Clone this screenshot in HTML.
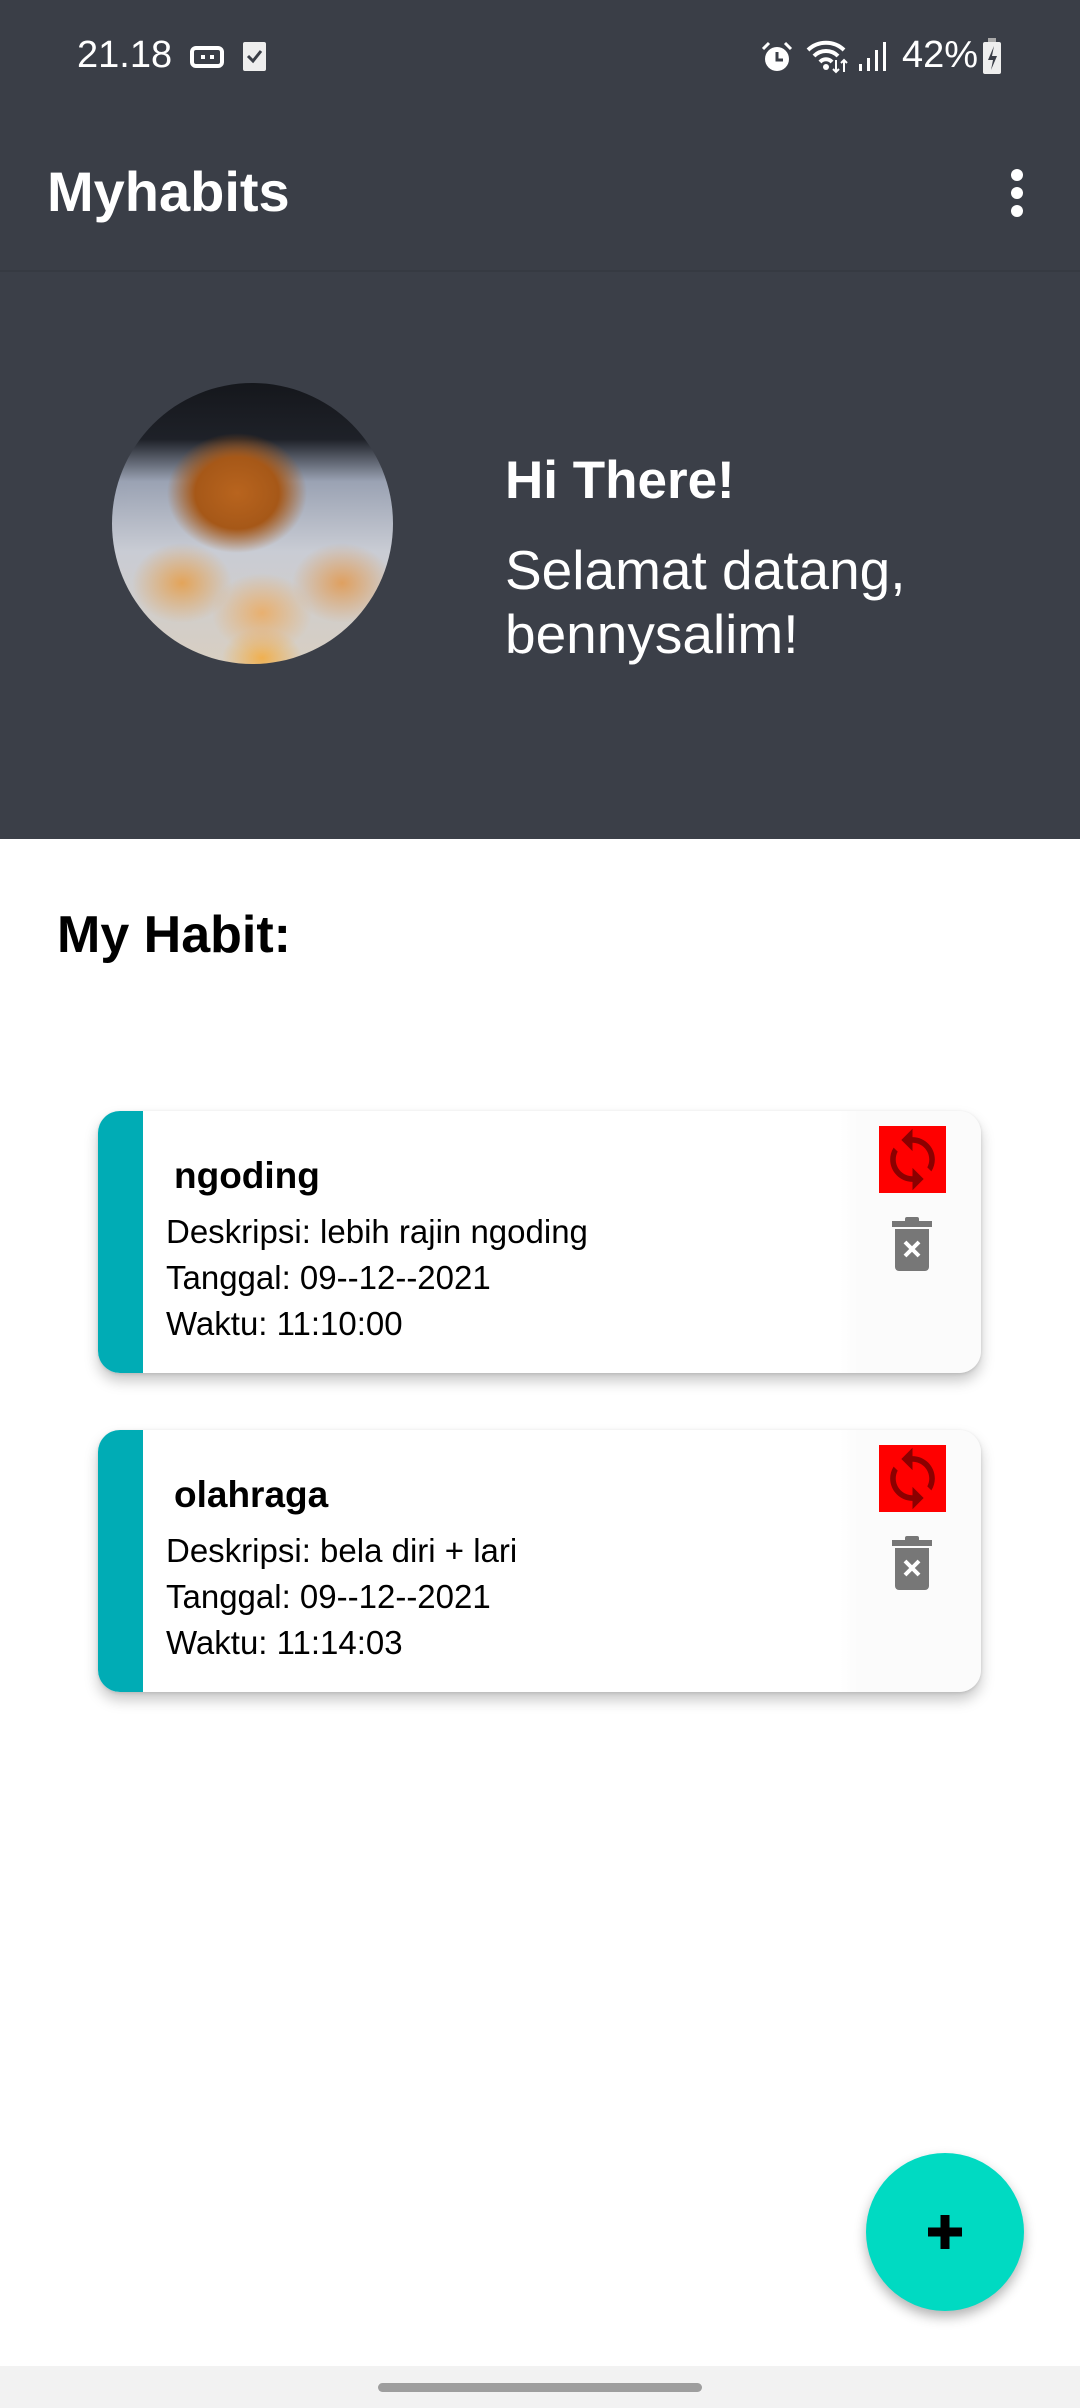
<!DOCTYPE html>
<html><head><meta charset="utf-8"><style>
*{margin:0;padding:0;box-sizing:border-box}
body{width:1080px;height:2408px;background:#fff;font-family:"Liberation Sans",sans-serif;position:relative;overflow:hidden}
.abs{position:absolute}
.top{left:0;top:0;width:1080px;height:270px;background:#3a3e47}
.hdr{left:0;top:270px;width:1080px;height:569px;background:#3b3f48;border-top:2px solid #363a42}
.sb{color:#fff;font-size:38px;top:34px}
.title{left:47px;top:164px;color:#fff;font-size:56px;line-height:1;font-weight:bold}
.av{left:112px;top:383px;width:281px;height:281px;border-radius:50%;overflow:hidden;
background:
radial-gradient(ellipse 70px 60px at 125px 110px,#b8641e 0,#a65818 60%,rgba(166,88,24,0) 100%),
radial-gradient(ellipse 50px 40px at 70px 200px,#e3a45a,rgba(227,164,90,0) 100%),
radial-gradient(ellipse 50px 40px at 150px 230px,#e8b070,rgba(232,176,112,0) 100%),
radial-gradient(ellipse 50px 40px at 230px 200px,#dfa060,rgba(223,160,96,0) 100%),
radial-gradient(ellipse 40px 30px at 150px 275px,#f0b050,rgba(240,176,80,0) 100%),
linear-gradient(180deg,#15171c 0,#1e2128 20%,#9aa2b3 35%,#c9ccd4 60%,#d8cfc2 100%)}
.hi{left:505px;top:450px;color:#fff;font-size:53px;font-weight:bold}
.sel{left:505px;top:538px;color:#fff;font-size:55px;line-height:64px}
.mh{left:57px;top:905px;font-size:52px;font-weight:bold;color:#000}
.card{left:98px;width:883px;height:262px;border-radius:22px;background:linear-gradient(90deg,#fff 0,#fff 84%,#fbfbfb 86%);box-shadow:0 8px 14px rgba(0,0,0,.22),0 1px 3px rgba(0,0,0,.12);overflow:hidden}
.bar{left:0;top:0;width:45px;height:100%;background:#00acb5}
.nm{left:76px;top:44px;font-size:37px;font-weight:bold;color:#000}
.ln{left:68px;font-size:33px;color:#000}
.rf{left:781px;top:15px;width:67px;height:67px;background:#f00}
.tr{left:794px;top:104px}
.fab{left:866px;top:2153px;width:158px;height:158px;border-radius:50%;background:#00dac2;box-shadow:0 6px 12px rgba(0,0,0,.3)}
.nav{left:0;top:2366px;width:1080px;height:42px;background:#f2f2f2}
.hd{left:378px;top:2383px;width:324px;height:9px;border-radius:5px;background:#9e9e9e}
</style></head><body>
<div class="abs top"></div>
<div class="abs sb" style="left:77px">21.18</div>
<svg class="abs" style="left:190px;top:44px" width="36" height="28" viewBox="0 0 36 28"><rect x="2" y="4" width="30" height="18" rx="4" fill="none" stroke="#fff" stroke-width="4"/><rect x="11" y="11" width="4" height="4" fill="#fff"/><rect x="20" y="11" width="4" height="4" fill="#fff"/></svg>
<svg class="abs" style="left:242px;top:40px" width="26" height="32" viewBox="0 0 26 32"><rect x="1" y="2" width="23" height="29" rx="2" fill="#eee"/><path d="M6 16l5 5 8-10" stroke="#3a3e47" stroke-width="3" fill="none"/></svg>
<svg class="abs" style="left:760px;top:40px" width="34" height="34" viewBox="0 0 34 34"><circle cx="17" cy="19" r="12" fill="#fff"/><path d="M17 12v8h6" stroke="#3a3e47" stroke-width="3" fill="none"/><path d="M3 9l6-6M31 9l-6-6" stroke="#fff" stroke-width="3"/></svg>
<svg class="abs" style="left:806px;top:38px" width="44" height="36" viewBox="0 0 44 36"><path d="M2 12a26 26 0 0 1 36 0M8 18a17 17 0 0 1 24 0M14 24a8 8 0 0 1 12 0" stroke="#fff" stroke-width="4" fill="none"/><circle cx="20" cy="29" r="3" fill="#fff"/><path d="M30 22v12M27 31l3 3 3-3M38 34V22M35 25l3-3 3 3" stroke="#fff" stroke-width="2" fill="none"/></svg>
<svg class="abs" style="left:858px;top:40px" width="30" height="32" viewBox="0 0 30 32"><rect x="1" y="24" width="3" height="7" fill="#fff"/><rect x="9" y="18" width="3" height="13" fill="#fff"/><rect x="17" y="10" width="3" height="21" fill="#fff"/><rect x="25" y="2" width="3" height="29" fill="#fff"/></svg>
<div class="abs sb" style="left:902px">42%</div>
<svg class="abs" style="left:982px;top:38px" width="20" height="36" viewBox="0 0 20 36"><rect x="6" y="0" width="8" height="4" fill="#aaa"/><rect x="1" y="4" width="18" height="32" rx="2" fill="#eee"/><path d="M12 8l-6 14h5l-2 10 6-14h-5z" fill="#3a3e47"/></svg>
<div class="abs title">Myhabits</div>
<svg class="abs" style="left:1004px;top:168px" width="26" height="50" viewBox="0 0 26 50"><circle cx="13" cy="7" r="6" fill="#fff"/><circle cx="13" cy="25" r="6" fill="#fff"/><circle cx="13" cy="43" r="6" fill="#fff"/></svg>
<div class="abs hdr"></div>
<div class="abs av"></div>
<div class="abs hi">Hi There!</div>
<div class="abs sel">Selamat datang,<br>bennysalim!</div>
<div class="abs mh">My Habit:</div>

<div class="abs card" style="top:1111px">
<div class="abs bar"></div>
<div class="abs nm">ngoding</div>
<div class="abs ln" style="top:102px">Deskripsi: lebih rajin ngoding</div>
<div class="abs ln" style="top:148px">Tanggal: 09--12--2021</div>
<div class="abs ln" style="top:194px">Waktu: 11:10:00</div>
<div class="abs rf"><svg width="67" height="67" viewBox="0 0 24 24"><path d="M12 4V1L8 5l4 4V6c3.3 0 6 2.7 6 6 0 1-.25 2-.7 2.8l1.46 1.46A8 8 0 0 0 20 12c0-4.4-3.6-8-8-8zm0 14c-3.3 0-6-2.7-6-6 0-1 .25-2 .7-2.8L5.24 7.740A8 8 0 0 0 4 12c0 4.4 3.6 8 8 8v3l4-4-4-4v3z" fill="#8b0000"/></svg></div>
<svg class="abs tr" width="40" height="56" viewBox="0 0 40 56"><rect x="0" y="6" width="40" height="6" fill="#777"/><rect x="13" y="2" width="14" height="6" rx="2" fill="#777"/><path d="M3 14h34v38a4 4 0 0 1-4 4H7a4 4 0 0 1-4-4z" fill="#777"/><path d="M13 27l14 14M27 27L13 41" stroke="#fff" stroke-width="4"/></svg>
</div>

<div class="abs card" style="top:1430px">
<div class="abs bar"></div>
<div class="abs nm">olahraga</div>
<div class="abs ln" style="top:102px">Deskripsi: bela diri + lari</div>
<div class="abs ln" style="top:148px">Tanggal: 09--12--2021</div>
<div class="abs ln" style="top:194px">Waktu: 11:14:03</div>
<div class="abs rf"><svg width="67" height="67" viewBox="0 0 24 24"><path d="M12 4V1L8 5l4 4V6c3.3 0 6 2.7 6 6 0 1-.25 2-.7 2.8l1.46 1.46A8 8 0 0 0 20 12c0-4.4-3.6-8-8-8zm0 14c-3.3 0-6-2.7-6-6 0-1 .25-2 .7-2.8L5.24 7.74A8 8 0 0 0 4 12c0 4.4 3.6 8 8 8v3l4-4-4-4v3z" fill="#8b0000"/></svg></div>
<svg class="abs tr" width="40" height="56" viewBox="0 0 40 56"><rect x="0" y="6" width="40" height="6" fill="#777"/><rect x="13" y="2" width="14" height="6" rx="2" fill="#777"/><path d="M3 14h34v38a4 4 0 0 1-4 4H7a4 4 0 0 1-4-4z" fill="#777"/><path d="M13 27l14 14M27 27L13 41" stroke="#fff" stroke-width="4"/></svg>
</div>

<div class="abs fab"><svg width="158" height="158" viewBox="0 0 158 158"><path d="M79 62v34M62 79h34" stroke="#000" stroke-width="9"/></svg></div>
<div class="abs nav"></div>
<div class="abs hd"></div>
</body></html>
